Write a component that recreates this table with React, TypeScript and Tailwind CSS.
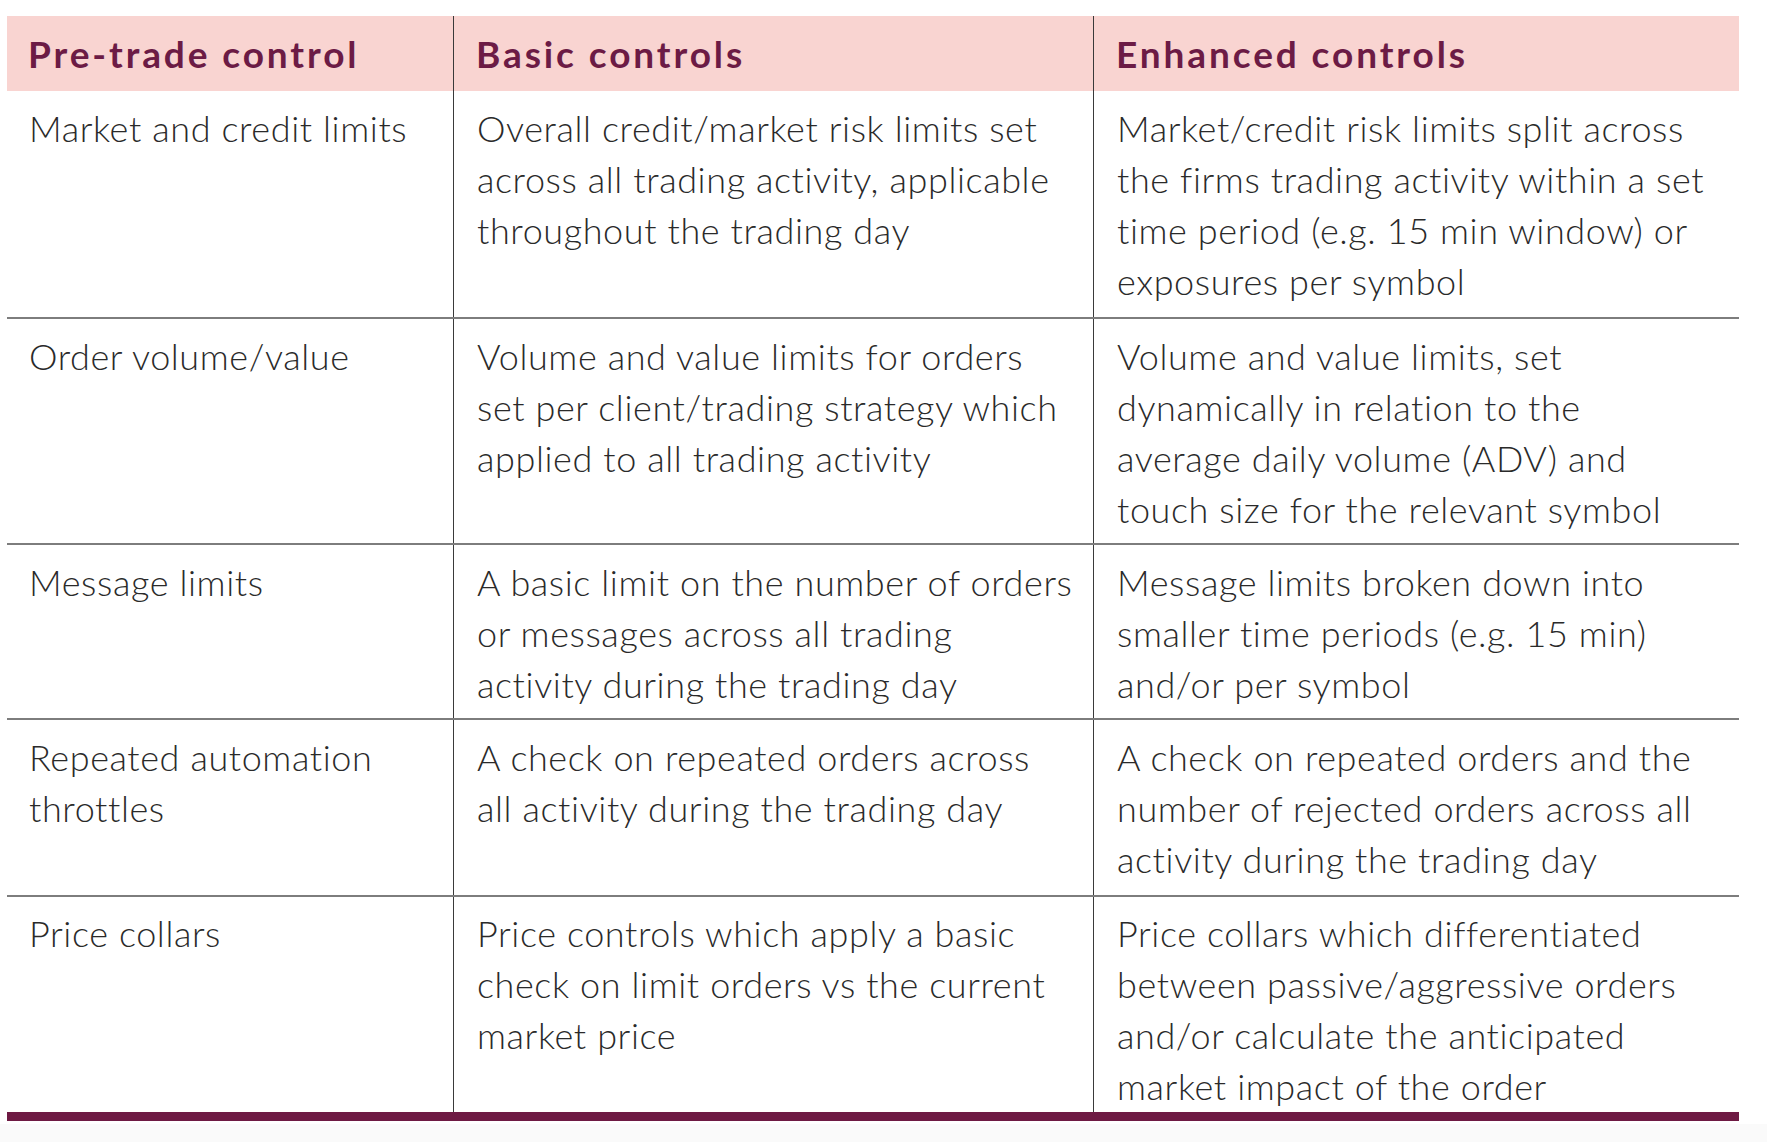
import React from 'react';

const rows: string[][][] = [
    [
        ['Market and credit limits'],
        ['Overall credit/market risk limits set', 'across all trading activity, applicable', 'throughout the trading day'],
        ['Market/credit risk limits split across', 'the firms trading activity within a set', 'time period (e.g. 15 min window) or', 'exposures per symbol'],
    ],
    [
        ['Order volume/value'],
        ['Volume and value limits for orders', 'set per client/trading strategy which', 'applied to all trading activity'],
        ['Volume and value limits, set', 'dynamically in relation to the', 'average daily volume (ADV) and', 'touch size for the relevant symbol'],
    ],
    [
        ['Message limits'],
        ['A basic limit on the number of orders', 'or messages across all trading', 'activity during the trading day'],
        ['Message limits broken down into', 'smaller time periods (e.g. 15 min)', 'and/or per symbol'],
    ],
    [
        ['Repeated automation', 'throttles'],
        ['A check on repeated orders across', 'all activity during the trading day'],
        ['A check on repeated orders and the', 'number of rejected orders across all', 'activity during the trading day'],
    ],
    [
        ['Price collars'],
        ['Price controls which apply a basic', 'check on limit orders vs the current', 'market price'],
        ['Price collars which differentiated', 'between passive/aggressive orders', 'and/or calculate the anticipated', 'market impact of the order'],
    ],
];

const headers = ['Pre-trade control', 'Basic controls', 'Enhanced controls'];

// row paddings, tuned so the rule lines land where the original has them
const pad = [
    'pt-[12px] pb-[10px]',
    'pt-[12px] pb-[8px]',
    'pt-[12px] pb-[8px]',
    'pt-[12px] pb-[10px]',
    'pt-[11px] pb-0',
];

const Cell = ({lines, col, row}: {lines: string[]; col: number; row: number}) => (
    <div className={`whitespace-nowrap ${pad[row]} ${col === 0 ? 'pl-[22px]' : 'pl-[23px] border-l border-[#3a3a3a]'}`}>
        {lines.map((l, i) => (
            <div key={i} className='h-[51px] leading-[51px]'>{l}</div>
        ))}
    </div>
);

const App = () => {
    return (
        <div className='w-[1767px] h-[1142px] bg-white flex flex-col overflow-hidden' style={{fontFamily: 'Lato, "Open Sans", sans-serif'}}>
            <div className='pt-[16px] pl-[7px]'>
                <div className='w-[1732px]'>
                    <div className='grid grid-cols-[446px_640px_646px] bg-[#f9d4d1] h-[75px] items-stretch'>
                        {headers.map((h, i) => (
                            <div key={h} className={`flex items-center font-bold text-[37px] text-[#6c1b45] tracking-[2.9px] ${i === 0 ? 'pl-[21px]' : 'pl-[22px] border-l border-[#3a3a3a]'}`}>
                                {h}
                            </div>
                        ))}
                    </div>
                    {rows.map((r, ri) => (
                        <div key={ri} className={`grid grid-cols-[446px_640px_646px] text-[36px] font-light text-[#2a2a2a] tracking-[0.6px] ${ri > 0 ? 'border-t-2 border-[#7d7d7d]' : ''}`}>
                            {r.map((lines, ci) => <Cell key={ci} lines={lines} col={ci} row={ri}/>)}
                        </div>
                    ))}
                    <div className='h-[9px] bg-[#6e1a43]'/>
                </div>
            </div>
            <div className='flex-1 mt-[3px] bg-[#fafafa]'/>
        </div>
    );
};

export default App;
